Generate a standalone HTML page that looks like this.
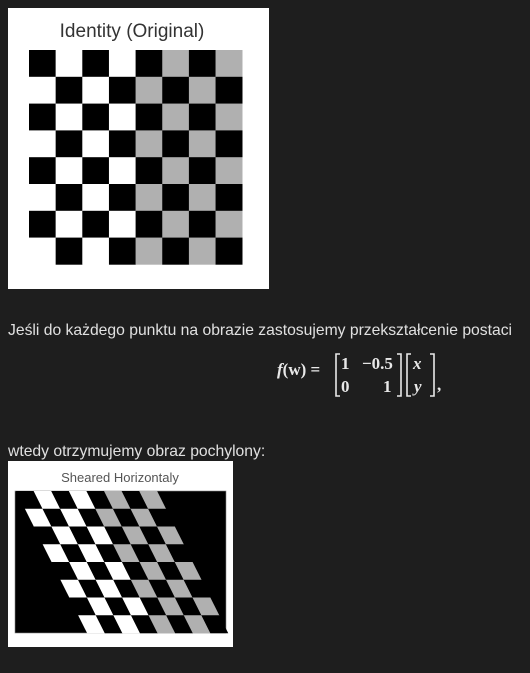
<!DOCTYPE html>
<html><head><meta charset="utf-8"><style>
body{margin:0;background:#1e1e1e;width:530px;height:673px;overflow:hidden;position:relative;font-family:"Liberation Sans",sans-serif}
.t{position:absolute;left:8px;color:#e0e0e0;font-size:15.7px;white-space:nowrap;font-family:"Liberation Sans","DejaVu Sans",sans-serif}
.m{position:absolute;font-family:"Liberation Serif",serif;font-weight:bold;color:#e8e8e8;font-size:16px;white-space:nowrap}
</style></head><body>
<svg style="position:absolute;left:0;top:0" width="530" height="673">
<rect x="8" y="8" width="261" height="281" fill="#fff"/>
<text x="132" y="37" font-family="Liberation Sans" font-size="19" fill="#333" text-anchor="middle">Identity (Original)</text>
<g id="b1"></g>
<rect x="8" y="461" width="225" height="186" fill="#fff"/>
<text x="120" y="482" font-family="Liberation Sans" font-size="13" fill="#555" text-anchor="middle">Sheared Horizontaly</text>
<rect x="15" y="491" width="211" height="142" fill="#000" stroke="#888" stroke-width="0.6"/>
<g id="b2" transform="translate(16,491) skewX(26.565)"></g>
</svg>
<div class="t" style="top:322px">Jeśli do każdego punktu na obrazie zastosujemy przekształcenie postaci</div>
<div class="t" style="top:443px">wtedy otrzymujemy obraz pochylony:</div>
<div class="m" style="left:277px;top:360px;font-size:17px"><i>f</i>(w) =</div>
<svg style="position:absolute;left:333px;top:352px" width="110" height="46">
<g fill="none" stroke="#e8e8e8" stroke-width="1.6">
<path d="M7 2H3V44H7"/><path d="M64 2H68V44H64"/>
<path d="M78 2H74V44H78"/><path d="M97 2H101V44H97"/>
</g>
<g font-family="Liberation Serif" font-weight="bold" font-size="17" fill="#e8e8e8">
<text x="8" y="17">1</text><text x="29" y="17">−0.5</text>
<text x="8" y="40">0</text><text x="50" y="40">1</text>
<text x="80" y="17" font-style="italic">x</text><text x="81" y="40" font-style="italic">y</text>
<text x="104" y="38">,</text>
</g></svg>
<script>
var ns="http://www.w3.org/2000/svg";
function cells(g,x0,y0,w,h){for(var r=0;r<8;r++)for(var c=0;c<8;c++){var e=document.createElementNS(ns,"rect");e.setAttribute("x",x0+c*w);e.setAttribute("y",y0+r*h);e.setAttribute("width",w+0.3);e.setAttribute("height",h+0.3);e.setAttribute("fill",(r+c)%2==0?"#000":(c<4?"#fff":"#b0b0b0"));g.appendChild(e);}}
cells(document.getElementById("b1"),29,50,26.65,26.8);
cells(document.getElementById("b2"),0,0,17.6,17.75);
</script>
</body></html>
